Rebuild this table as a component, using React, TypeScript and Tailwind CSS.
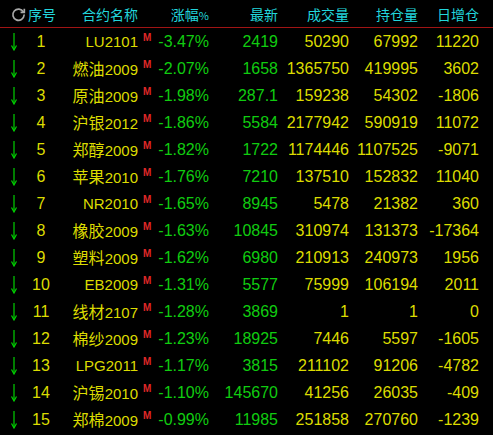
import React from 'react'

type Row = {
  cn: string
  code: string
  pct: string
  last: string
  vol: string
  oi: string
  chg: string
}

const rows: Row[] = [
  { cn: '', code: 'LU2101', pct: '-3.47%', last: '2419', vol: '50290', oi: '67992', chg: '11220' },
  { cn: '燃油', code: '2009', pct: '-2.07%', last: '1658', vol: '1365750', oi: '419995', chg: '3602' },
  { cn: '原油', code: '2009', pct: '-1.98%', last: '287.1', vol: '159238', oi: '54302', chg: '-1806' },
  { cn: '沪银', code: '2012', pct: '-1.86%', last: '5584', vol: '2177942', oi: '590919', chg: '11072' },
  { cn: '郑醇', code: '2009', pct: '-1.82%', last: '1722', vol: '1174446', oi: '1107525', chg: '-9071' },
  { cn: '苹果', code: '2010', pct: '-1.76%', last: '7210', vol: '137510', oi: '152832', chg: '11040' },
  { cn: '', code: 'NR2010', pct: '-1.65%', last: '8945', vol: '5478', oi: '21382', chg: '360' },
  { cn: '橡胶', code: '2009', pct: '-1.63%', last: '10845', vol: '310974', oi: '131373', chg: '-17364' },
  { cn: '塑料', code: '2009', pct: '-1.62%', last: '6980', vol: '210913', oi: '240973', chg: '1956' },
  { cn: '', code: 'EB2009', pct: '-1.31%', last: '5577', vol: '75999', oi: '106194', chg: '2011' },
  { cn: '线材', code: '2107', pct: '-1.28%', last: '3869', vol: '1', oi: '1', chg: '0' },
  { cn: '棉纱', code: '2009', pct: '-1.23%', last: '18925', vol: '7446', oi: '5597', chg: '-1605' },
  { cn: '', code: 'LPG2011', pct: '-1.17%', last: '3815', vol: '211102', oi: '91206', chg: '-4782' },
  { cn: '沪锡', code: '2010', pct: '-1.10%', last: '145670', vol: '41256', oi: '26035', chg: '-409' },
  { cn: '郑棉', code: '2009', pct: '-0.99%', last: '11985', vol: '251858', oi: '270760', chg: '-1239' },
]

const cols = 'grid grid-cols-[28px_26px_84px_17px_54px_69px_71px_69px_61px_14px]'

function RefreshIcon() {
  return (
    <svg width="15" height="15" viewBox="0 0 16 16" fill="none" stroke="#a8a8a8" strokeWidth="1.8">
      <path d="M13.2 5.2A6 6 0 1 0 14 8.6" strokeLinecap="round" />
      <path d="M14.2 1.8v4h-4" fill="none" />
    </svg>
  )
}

function DownArrow() {
  return (
    <svg width="8" height="18" viewBox="0 0 8 18">
      <line x1="4" y1="0" x2="4" y2="16.5" stroke="#00d000" strokeWidth="1.2" />
      <path d="M1.5 12.5 L4 17 L6.5 12.5" stroke="#00d000" strokeWidth="1.2" fill="none" />
    </svg>
  )
}

export default function App() {
  return (
    <div className="w-[493px] h-[435px] bg-black overflow-hidden font-['Liberation_Sans','Noto_Sans_CJK_SC',sans-serif]">
      {/* Header */}
      <div className={`${cols} h-[27px] items-center text-[14px] text-[#22d6dc] font-['Noto_Sans_CJK_SC',sans-serif] leading-none`}>
        <div className="flex justify-end pr-[2px] pt-[1px]">
          <RefreshIcon />
        </div>
        <div className="whitespace-nowrap">序号</div>
        <div className="text-right">合约名称</div>
        <div />
        <div className="text-right whitespace-nowrap">涨幅<span className="text-[11px]">%</span></div>
        <div className="text-right">最新</div>
        <div className="text-right">成交量</div>
        <div className="text-right">持仓量</div>
        <div className="text-right">日增仓</div>
        <div />
      </div>
      <div className="h-px bg-[#a01414]" />

      {/* Rows */}
      {rows.map((r, i) => (
        <div key={i} className={`${cols} h-[27px] leading-[27px] text-[16px] text-[#dcdc00] whitespace-nowrap`}>
          <div className="flex justify-center pt-[5px]">
            <DownArrow />
          </div>
          <div className="text-center">{i + 1}</div>
          <div className="text-right">
            {r.cn && <span className="font-['Noto_Sans_CJK_SC',sans-serif] text-[16px]">{r.cn}</span>}
            <span className="text-[15px]">{r.code}</span>
          </div>
          <div className="pl-[5px] pt-[5px] text-[10px] leading-none font-bold text-[#e02828]">M</div>
          <div className="text-right text-[#10cc10]">{r.pct}</div>
          <div className="text-right text-[#10cc10]">{r.last}</div>
          <div className="text-right">{r.vol}</div>
          <div className="text-right">{r.oi}</div>
          <div className="text-right">{r.chg}</div>
          <div />
        </div>
      ))}
    </div>
  )
}
